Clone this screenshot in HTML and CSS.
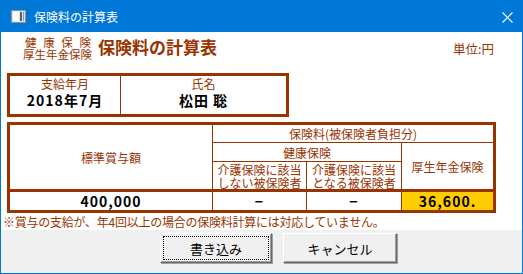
FILE: index.html
```html
<!DOCTYPE html>
<html lang="ja">
<head>
    <meta charset="UTF-8">
    <title>保険料の計算表</title>
    <link rel="stylesheet" href="styles.css">
</head>
<body>

<div class="window">
    <div class="titlebar">
        <svg class="app-icon" width="15" height="13" viewBox="0 0 15 13">
            <rect x="0.5" y="0.5" width="14" height="12" fill="#dfe6ee" stroke="#8a96a3"/>
            <rect x="2" y="2" width="6" height="9" fill="#ffffff"/>
            <rect x="9" y="2" width="2" height="9" fill="#56616d"/>
            <rect x="12" y="2" width="1" height="9" fill="#8a96a3"/>
        </svg>
        <span class="title">保険料の計算表</span>
        <svg class="close" width="11" height="11" viewBox="0 0 11 11">
            <path d="M0.5 0.5 L10.5 10.5 M10.5 0.5 L0.5 10.5" stroke="#ffffff" stroke-width="1.1"/>
        </svg>
    </div>

    <div class="content">
        <div class="header">
            <div class="kind">
                <div class="kind-spaced"><span>健</span><span>康</span><span>保</span><span>険</span></div>
                <div>厚生年金保険</div>
            </div>
            <h1>保険料の計算表</h1>
            <div class="unit">単位:円</div>
        </div>

        <div class="info-box">
            <div class="info-cell">
                <div class="label">支給年月</div>
                <div class="value">2018年7月</div>
            </div>
            <div class="info-cell">
                <div class="label">氏名</div>
                <div class="value">松田 聡</div>
            </div>
        </div>

        <div class="calc">
            <div class="calc-head">
                <div class="cell c-base">標準賞与額</div>
                <div class="cell c-premium">保険料(被保険者負担分)</div>
                <div class="cell c-health">健康保険</div>
                <div class="cell c-pension">厚生年金保険</div>
                <div class="cell c-care1">介護保険に該当<br>しない被保険者</div>
                <div class="cell c-care2">介護保険に該当<br>となる被保険者</div>
            </div>
            <div class="calc-row">
                <div class="cell num">400,000</div>
                <div class="cell num">−</div>
                <div class="cell num">−</div>
                <div class="cell num result">36,600.</div>
            </div>
        </div>

        <p class="note">※賞与の支給が、年4回以上の場合の保険料計算には対応していません。</p>
    </div>

    <div class="footer">
        <button type="button" class="btn btn-default"><span>書き込み</span></button>
        <button type="button" class="btn"><span>キャンセル</span></button>
    </div>
</div>

</body>
</html>
```

FILE: styles.css
```css
body {
    margin: 0;
    font-family: "Noto Sans CJK JP", "Liberation Sans", sans-serif;
    font-size: 12px;
    background: #ffffff;
}
.window {
    width: 523px;
    height: 274px;
    box-sizing: border-box;
    border: 1px solid #0078d7;
    display: flex;
    flex-direction: column;
}
.titlebar {
    height: 31px;
    background: #0078d7;
    color: white;
    display: flex;
    align-items: center;
    padding: 0 9px 0 10px;
    flex-shrink: 0;
}
.app-icon {
    margin-right: 8px;
}
.title {
    flex: 1;
    font-size: 12px;
    line-height: 14px;
}
.close {
    margin-top: 1px;
}
.content {
    flex: 1;
    padding: 0 0 0 6px;
    color: #993300;
}
.header {
    height: 41px;
    display: flex;
    align-items: flex-end;
    padding: 0 28px 0 16px;
    box-sizing: border-box;
}
.kind {
    width: 70px;
    flex-shrink: 0;
    font-size: 11.5px;
    line-height: 12px;
    white-space: nowrap;
    padding-bottom: 13px;
}
.kind-spaced {
    display: flex;
    justify-content: space-between;
    padding: 0 2px;
}
h1 {
    margin: 0 0 0 5px;
    font-size: 17px;
    font-weight: bold;
    line-height: 20px;
    padding-bottom: 16px;
    flex: 1;
}
.unit {
    font-size: 12.5px;
    padding-bottom: 15px;
}
.info-box {
    width: 282px;
    height: 44px;
    box-sizing: border-box;
    border: 3px solid #993300;
    display: grid;
    grid-template-columns: 110px 165px;
    column-gap: 1px;
    background: #993300;
}
.info-cell {
    background: white;
    text-align: center;
}
.label {
    font-size: 12px;
    line-height: 14px;
    padding-top: 1px;
}
.value {
    color: #000000;
    font-size: 14px;
    font-weight: bold;
    line-height: 18px;
    letter-spacing: 1px;
}
.calc {
    margin-top: 5px;
    width: 489px;
    box-sizing: border-box;
    border: 3px solid #993300;
    background: #993300;
}
.calc-head, .calc-row {
    display: grid;
    grid-template-columns: 202px 93px 94px 91px;
    gap: 1px;
}
.calc-head {
    grid-template-rows: 17px 18px 27px;
}
.calc-row {
    margin-top: 3px;
    height: 18px;
}
.cell {
    background: white;
    display: flex;
    align-items: center;
    justify-content: center;
    text-align: center;
    line-height: 13px;
    white-space: nowrap;
}
.c-base {
    grid-row: 1 / 4;
    grid-column: 1;
}
.c-premium {
    grid-row: 1;
    grid-column: 2 / 5;
}
.c-health {
    grid-row: 2;
    grid-column: 2 / 4;
}
.c-pension {
    grid-row: 2 / 4;
    grid-column: 4;
}
.c-care1 {
    grid-row: 3;
    grid-column: 2;
}
.c-care2 {
    grid-row: 3;
    grid-column: 3;
}
.num {
    color: #000000;
    font-size: 14px;
    font-weight: bold;
    letter-spacing: 1px;
}
.result {
    background: #ffcc00;
}
.note {
    margin: 2px 0 0 -4px;
    font-size: 12px;
    line-height: 14px;
    letter-spacing: -0.25px;
}
.footer {
    height: 40px;
    background: #f0f0f0;
    display: flex;
    align-items: flex-start;
    padding: 3px 0 0 159px;
    gap: 11px;
    flex-shrink: 0;
}
.btn {
    height: 30px;
    width: 112px;
    padding: 2px;
    font-family: "Noto Sans CJK JP", sans-serif;
    font-size: 13px;
    color: #000000;
    background: #f0f0f0;
    border: 1px solid;
    border-color: #ffffff #696969 #696969 #ffffff;
    box-shadow: inset -1px -1px 0 #a0a0a0, 1px 1px 0 #a0a0a0;
}
.btn span {
    display: flex;
    align-items: center;
    justify-content: center;
    height: 100%;
    box-sizing: border-box;
    border: 1px solid transparent;
}
.btn-default span {
    border: 1px dotted #000000;
}
.btn + .btn {
    width: 114px;
}
```
